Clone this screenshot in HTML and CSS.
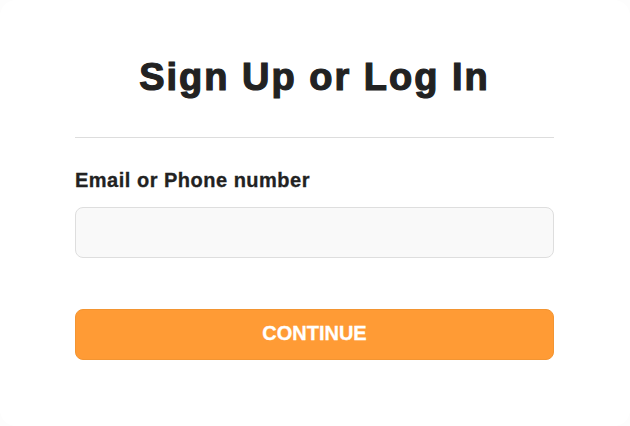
FILE: index.html
```html
<!DOCTYPE html>
<html>
<head>
<meta charset="utf-8">
<link rel="stylesheet" href="styles.css">
</head>
<body>
<div class="modal">
  <h1 class="title">Sign Up or Log In</h1>
  <hr class="divider">
  <label class="label" for="ident">Email or Phone number</label>
  <input class="input" id="ident" type="text">
  <button class="btn">CONTINUE</button>
</div>
</body>
</html>
```
FILE: styles.css
```css
html, body { margin: 0; padding: 0; background: #fdfdfd; }
body { font-family: "Liberation Sans", Arial, sans-serif; }
.modal {
  box-sizing: border-box;
  width: 630px;
  height: 426px;
  background: #fff;
  border-radius: 16px;
  padding: 56px 76px 0 75px;
  display: flex;
  flex-direction: column;
}
.title {
  margin: 0;
  text-align: center;
  font-size: 38px;
  font-weight: 700;
  letter-spacing: 2px;
  color: #222;
  line-height: 42px;
  -webkit-text-stroke: 1.2px #222;
}
.divider {
  margin: 39px 0 0;
  border: 0;
  border-top: 1px solid #ddd;
  height: 0;
}
.label {
  margin-top: 31px;
  font-size: 20px;
  font-weight: 700;
  color: #222;
  line-height: 22px;
  letter-spacing: 0.5px;
  -webkit-text-stroke: 0.3px #222;
}
.input {
  margin-top: 16px;
  box-sizing: border-box;
  height: 51px;
  border: 1px solid #dedede;
  border-radius: 8px;
  background: #f9f9f9;
  outline: none;
}
.btn {
  margin-top: 51px;
  box-sizing: border-box;
  height: 51px;
  border: 1px solid #f39532;
  border-radius: 8px;
  background: #ff9b35;
  color: #fff;
  font-family: "Liberation Sans", Arial, sans-serif;
  font-weight: 700;
  font-size: 20px;
  padding: 0 0 3px;
  -webkit-text-stroke: 0.3px #fff;
}
```
